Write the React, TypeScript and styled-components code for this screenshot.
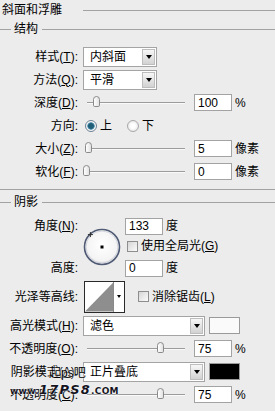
import React from 'react';
import styled, { createGlobalStyle } from 'styled-components';

const FONT = `"Liberation Sans", "Noto Sans CJK SC", sans-serif`;

const GlobalStyle = createGlobalStyle`
  html, body {
    margin: 0;
    padding: 0;
    background: #ececec;
  }
`;

const Panel = styled.div`
  position: relative;
  width: 275px;
  height: 411px;
  overflow: hidden;
  background: #ececec;
  color: #000;
  font-family: ${FONT};
  font-size: 12px;
  line-height: 1;
`;

const TitleBar = styled.div`
  display: flex;
  align-items: center;
  height: 20px;
  padding-left: 2px;
  gap: 21px;
`;

const Rule = styled.div`
  flex: 1;
  border-top: 1px solid #a2a2a2;
`;

const Legend = styled.div<{ $top?: number }>`
  display: flex;
  align-items: center;
  height: 18px;
  margin-top: ${p => p.$top ?? 0}px;
`;

const LegendLead = styled.div`
  width: 11px;
  border-top: 1px solid #a2a2a2;
`;

const LegendText = styled.span`
  margin: 0 4px 0 3px;
`;

const Group = styled.div<{ $pad: number }>`
  display: flex;
  flex-direction: column;
  padding-top: ${p => p.$pad}px;
`;

const GroupEnd = styled.div`
  margin-top: 6px;
  border-top: 1px solid #a2a2a2;
`;

const Row = styled.div<{ $h?: number }>`
  display: flex;
  align-items: center;
  height: ${p => p.$h ?? 23}px;
`;

const Label = styled.span<{ $gap?: number }>`
  width: 78px;
  flex-shrink: 0;
  text-align: right;
  white-space: nowrap;
  margin-right: ${p => p.$gap ?? 5}px;
`;

const Key = styled.span`
  text-decoration: underline;
`;

const Select = styled.div<{ $w: number }>`
  display: flex;
  width: ${p => p.$w}px;
  height: 20px;
  box-sizing: border-box;
  border: 1px solid #a4a4a4;
  background: #fff;
`;

const SelectText = styled.span`
  flex: 1;
  display: flex;
  align-items: center;
  padding-left: 6px;
`;

const SelectArrow = styled.span`
  width: 13px;
  margin: 1px;
  box-sizing: border-box;
  border: 1px solid #bdbdbd;
  background: linear-gradient(#f7f7f7, #d2d2d2);
  display: flex;
  align-items: center;
  justify-content: center;

  &::after {
    content: '';
    border-left: 3.5px solid transparent;
    border-right: 3.5px solid transparent;
    border-top: 4px solid #000;
  }
`;

const Slider = styled.div`
  position: relative;
  width: 106px;
  height: 13px;
  margin-right: 5px;
`;

const Track = styled.div`
  position: absolute;
  left: 4px;
  right: 4px;
  top: 6px;
  border-top: 1px solid #9c9c9c;
  border-bottom: 1px solid #fafafa;
`;

const Thumb = styled.div`
  position: absolute;
  top: 0;
  width: 7px;
  height: 11px;
  margin-left: -4px;
  box-sizing: border-box;
  border: 1px solid #8a8a8a;
  border-radius: 4px 4px 2px 2px;
  background: linear-gradient(90deg, #fff, #e2e2e2);
`;

const NumBox = styled.div`
  width: 38px;
  height: 17px;
  box-sizing: border-box;
  border: 1px solid #a3a3a3;
  background: #fff;
  padding-left: 3px;
  display: flex;
  align-items: center;
`;

const Unit = styled.span`
  margin-left: 3px;
`;

const Radio = styled.span<{ $on?: boolean }>`
  width: 12px;
  height: 12px;
  box-sizing: border-box;
  border-radius: 50%;
  border: 1px solid ${p => (p.$on ? '#6d8296' : '#a8a8a8')};
  background: ${p =>
    p.$on
      ? 'radial-gradient(circle, #1f5e78 0 2.5px, #6aa3bd 3.5px, #f4f4f4 4px)'
      : 'radial-gradient(circle, #fff 30%, #dcdcdc 100%)'};
  margin-right: 3px;
`;

const RadioItem = styled.span<{ $w: number }>`
  display: flex;
  align-items: center;
  width: ${p => p.$w}px;
`;

const Check = styled.span`
  width: 11px;
  height: 11px;
  box-sizing: border-box;
  border: 1px solid #8e8e8e;
  background: linear-gradient(135deg, #d6d6d6, #fbfbfb);
  margin-right: 3px;
  flex-shrink: 0;
`;

const CheckItem = styled.span<{ $left: number }>`
  display: flex;
  align-items: center;
  margin-left: ${p => p.$left}px;
  white-space: nowrap;
`;

const AngleBlock = styled.div`
  display: grid;
  grid-template-columns: 83px 42px 1fr;
  grid-template-rows: 18px 22px 22px;
  margin-top: 6px;
  align-items: center;
`;

const GridLabel = styled.span<{ $row: number }>`
  grid-column: 1;
  grid-row: ${p => p.$row};
  text-align: right;
  padding-right: 5px;
`;

const DialCell = styled.div`
  grid-column: 2;
  grid-row: 1 / 4;
  align-self: start;
  margin-top: 11px;
  width: 38px;
  height: 38px;
`;

const GridCell = styled.div<{ $row: number }>`
  grid-column: 3;
  grid-row: ${p => p.$row};
  display: flex;
  align-items: center;
`;

const ContourBox = styled.div`
  display: flex;
  width: 41px;
  height: 32px;
  box-sizing: border-box;
  border: 1px solid #2a2a2a;
  background: #fff;
`;

const ContourDrop = styled.span`
  width: 10px;
  border-left: 1px solid #8a8a8a;
  display: flex;
  align-items: center;
  justify-content: center;

  &::after {
    content: '';
    border-left: 2.5px solid transparent;
    border-right: 2.5px solid transparent;
    border-top: 3px solid #000;
  }
`;

const Swatch = styled.div<{ $c: string }>`
  width: 31px;
  height: 17px;
  box-sizing: border-box;
  border: 1px solid #9a9a9a;
  background: ${p => p.$c};
  margin-left: 4px;
`;

const Watermark = styled.div<{ $x: number; $y: number }>`
  position: absolute;
  left: ${p => p.$x}px;
  top: ${p => p.$y}px;
  white-space: nowrap;
  text-shadow: 0 0 2px #ececec, 0 0 2px #ececec;
`;

const WmSite = styled.span`
  font-family: "DejaVu Sans", sans-serif;
  font-weight: bold;
  font-size: 9px;
  color: #15151f;
  letter-spacing: 0.3px;
  text-shadow: 0 0 1px #fff, 0 0 2px #fff;

  b {
    font-size: 13px;
    font-style: italic;
    letter-spacing: 1.2px;
  }
`;

type SliderRowProps = { label: React.ReactNode; pct: number; value: string; unit: string };

const SliderRow: React.FC<SliderRowProps> = ({ label, pct, value, unit }) => (
  <Row>
    <Label>{label}</Label>
    <Slider>
      <Track />
      <Thumb style={{ left: 4 + pct * 98 }} />
    </Slider>
    <NumBox>{value}</NumBox>
    <Unit>{unit}</Unit>
  </Row>
);

const Dial: React.FC<{ angle: number }> = ({ angle }) => {
  const r = 17;
  const a = (angle * Math.PI) / 180;
  const mx = 19 + r * Math.cos(a);
  const my = 19 - r * Math.sin(a);
  return (
    <svg width="38" height="38" viewBox="0 0 38 38">
      <defs>
        <radialGradient id="dialFill" cx="50%" cy="45%" r="55%">
          <stop offset="0%" stopColor="#ffffff" />
          <stop offset="80%" stopColor="#f4f4f4" />
          <stop offset="100%" stopColor="#d8d8de" />
        </radialGradient>
      </defs>
      <circle cx="19" cy="19" r="17.5" fill="url(#dialFill)" stroke="#4f5a74" strokeWidth="1.6" />
      <circle cx="19" cy="19" r="16" fill="none" stroke="#c9ccd6" strokeWidth="0.8" />
      <rect x="17.5" y="17.5" width="3" height="3" fill="#000" />
      <path d={`M${mx - 2.5} ${my}H${mx + 2.5}M${mx} ${my - 2.5}V${my + 2.5}`} stroke="#333" strokeWidth="1" />
    </svg>
  );
};

const ContourPreview: React.FC = () => (
  <svg width="29" height="30" viewBox="0 0 29 30">
    <polygon points="0,30 29,0 29,30" fill="#8e8e8e" />
  </svg>
);

const App: React.FC = () => {
  return (
    <>
      <GlobalStyle />
      <Panel>
        <TitleBar>
          <span>斜面和浮雕</span>
          <Rule />
        </TitleBar>

        <Legend>
          <LegendLead />
          <LegendText>结构</LegendText>
          <Rule />
        </Legend>
        <Group $pad={7}>
          <Row>
            <Label>样式(<Key>T</Key>):</Label>
            <Select $w={74}>
              <SelectText>内斜面</SelectText>
              <SelectArrow />
            </Select>
          </Row>
          <Row>
            <Label>方法(<Key>Q</Key>):</Label>
            <Select $w={74}>
              <SelectText>平滑</SelectText>
              <SelectArrow />
            </Select>
          </Row>
          <SliderRow label={<>深度(<Key>D</Key>):</>} pct={0.1} value="100" unit="%" />
          <Row>
            <Label $gap={7}>方向:</Label>
            <RadioItem $w={42}>
              <Radio $on />上
            </RadioItem>
            <RadioItem $w={40}>
              <Radio />下
            </RadioItem>
          </Row>
          <SliderRow label={<>大小(<Key>Z</Key>):</>} pct={0.02} value="5" unit="像素" />
          <SliderRow label={<>软化(<Key>F</Key>):</>} pct={0} value="0" unit="像素" />
        </Group>
        <GroupEnd />

        <Legend $top={3}>
          <LegendLead />
          <LegendText>阴影</LegendText>
          <Rule />
        </Legend>
        <AngleBlock>
          <GridLabel $row={1}>角度(<Key>N</Key>):</GridLabel>
          <DialCell>
            <Dial angle={133} />
          </DialCell>
          <GridCell $row={1}>
            <NumBox>133</NumBox>
            <Unit>度</Unit>
          </GridCell>
          <GridCell $row={2}>
            <CheckItem $left={2}>
              <Check />使用全局光(<Key>G</Key>)
            </CheckItem>
          </GridCell>
          <GridLabel $row={3}>高度:</GridLabel>
          <GridCell $row={3}>
            <NumBox>0</NumBox>
            <Unit>度</Unit>
          </GridCell>
        </AngleBlock>

        <Row $h={35}>
          <Label $gap={6}>光泽等高线:</Label>
          <ContourBox>
            <ContourPreview />
            <ContourDrop />
          </ContourBox>
          <CheckItem $left={13}>
            <Check />消除锯齿(<Key>L</Key>)
          </CheckItem>
        </Row>
        <Row>
          <Label>高光模式(<Key>H</Key>):</Label>
          <Select $w={122}>
            <SelectText>滤色</SelectText>
            <SelectArrow />
          </Select>
          <Swatch $c="#fafafa" />
        </Row>
        <SliderRow label={<>不透明度(<Key>O</Key>):</>} pct={0.75} value="75" unit="%" />
        <Row>
          <Label>阴影模式(<Key>A</Key>):</Label>
          <Select $w={122}>
            <SelectText>正片叠底</SelectText>
            <SelectArrow />
          </Select>
          <Swatch $c="#000" />
        </Row>
        <SliderRow label={<>不透明度(<Key>C</Key>):</>} pct={0.75} value="75" unit="%" />

        <Watermark $x={49} $y={367}>起ps吧</Watermark>
        <Watermark $x={10} $y={383}>
          <WmSite>
            www.<b>17PS8</b>.COM
          </WmSite>
        </Watermark>
      </Panel>
    </>
  );
};

export default App;
